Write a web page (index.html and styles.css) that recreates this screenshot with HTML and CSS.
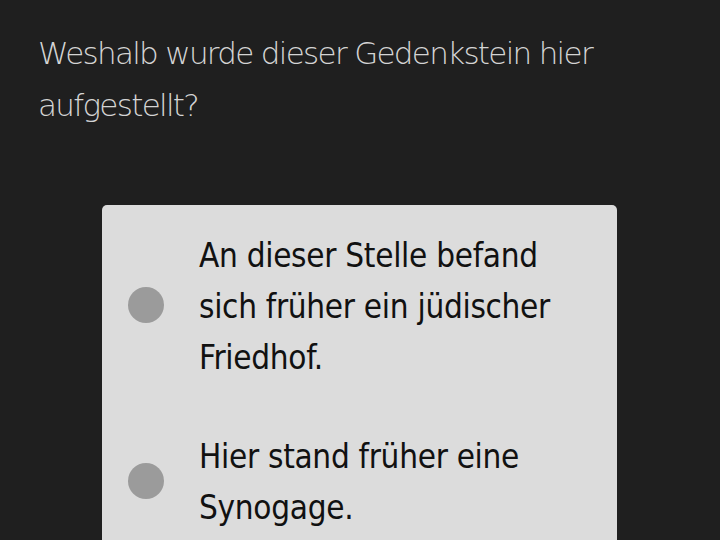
FILE: index.html
```html
<!DOCTYPE html>
<html lang="de">

<head>
    <meta charset="UTF-8">
    <meta name="viewport" content="width=device-width, initial-scale=1.0">
    <title>Quiz</title>
    <link rel="stylesheet" href="styles.css">
</head>

<body>
    <div class="quiz">
        <h1 class="question">Weshalb wurde dieser Gedenkstein hier aufgestellt?</h1>

        <div class="answers">
            <label class="answer">
                <span class="radio"></span>
                <span class="answer-text">An dieser Stelle befand sich früher ein jüdischer Friedhof.</span>
            </label>
            <label class="answer">
                <span class="radio"></span>
                <span class="answer-text">Hier stand früher eine Synogage.</span>
            </label>
        </div>
    </div>
</body>

</html>
```

FILE: styles.css
```css
body {
    margin: 0;
    padding: 0;
    background-color: #1f1f1f;
    font-family: "DejaVu Sans", "Noto Sans", sans-serif;
    font-stretch: condensed;
    overflow: hidden;
}

.quiz {
    padding: 27px 0 0 38px;
}

.question {
    margin: 0;
    width: 560px;
    font-size: 31px;
    font-weight: 200;
    letter-spacing: -1.7px;
    line-height: 52px;
    color: #d4d4d4;
}

.answers {
    margin: 74px 0 0 64px;
    width: 515px;
    padding: 25px 0 40px;
    background-color: #dcdcdc;
    border-radius: 5px;
    display: flex;
    flex-direction: column;
    gap: 48px;
}

.answer {
    display: flex;
    align-items: center;
    padding-left: 26px;
}

.radio {
    flex: none;
    width: 36px;
    height: 36px;
    border-radius: 50%;
    background-color: #9b9b9b;
    margin: -3px 35px 0 0;
}

.answer-text {
    width: 370px;
    font-size: 33px;
    letter-spacing: -0.3px;
    line-height: 51px;
    color: #111;
}
```
